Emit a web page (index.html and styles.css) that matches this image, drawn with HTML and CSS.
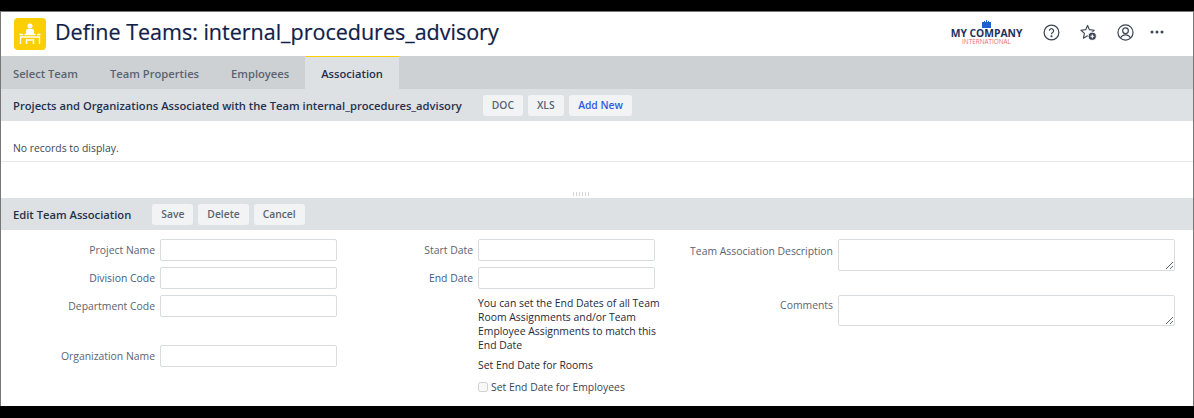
FILE: index.html
```html
<!DOCTYPE html>
<html lang="en">
<head>
    <meta charset="UTF-8">
    <title>Define Teams</title>
    <link rel="stylesheet" href="styles.css">
</head>
<body>
    <div class="page">
        <header class="header">
            <div class="app-icon">
                <svg width="32" height="32" viewBox="0 0 32 32" fill="none">
                    <rect x="13.5" y="5.5" width="5" height="5" rx="2.2" fill="#fff"/>
                    <path d="M12 17v-4.500q0-1.500 1.500-1.500h5q1.500 0 1.500 1.500V17z" fill="#fff"/>
                    <path d="M5.500 16.500H9M10.500 16.500H21.500M23 16.500H26.500" stroke="#fff" stroke-width="1.300"/>
                    <path d="M6.500 26v-7H25.500v7" stroke="#fff" stroke-width="1.300"/>
                    <path d="M12.500 26v-4h7v4" stroke="#fff" stroke-width="1.500"/>
                </svg>
            </div>
            <h1>Define Teams: internal_procedures_advisory</h1>
            <div class="header-right">
                <div class="logo">
                    <svg class="logo-mark" width="9" height="8" viewBox="0 0 9 8"><path d="M0 2h2V1h1v1h1V0h1v2h1V1h1v1h2v6H0z" fill="#1f5fd0"/></svg>
                    <span class="logo-name">MY COMPANY</span>
                    <span class="logo-sub">INTERNATIONAL</span>
                </div>
                <svg class="icon" width="17" height="17" viewBox="0 0 18 18" fill="none" stroke="#3c4654" stroke-width="1.300">
                    <circle cx="9" cy="9" r="7.800"/>
                    <path d="M6.800 7.200a2.200 2.200 0 1 1 3.400 1.800c-.8.500-1.200.9-1.200 1.800"/>
                    <circle cx="9" cy="13" r=".5" fill="#3c4654"/>
                </svg>
                <svg class="icon" width="17" height="17" viewBox="0 0 18 18" fill="none">
                    <path d="M8 1.500L10 6l5 .6-3.700 3.400 1.100 5L8 12.400 3.600 15l1.100-5L1 6.600 6 6z" stroke="#3c4654" stroke-width="1.200" stroke-linejoin="round"/>
                    <circle cx="13" cy="13" r="4.300" fill="#3c4654" stroke="#fff"/>
                    <path d="M13 11v4M11 13h4" stroke="#fff" stroke-width="1.200"/>
                </svg>
                <svg class="icon icon-last" width="17" height="17" viewBox="0 0 18 18" fill="none" stroke="#3c4654" stroke-width="1.300">
                    <circle cx="9" cy="9" r="8"/>
                    <circle cx="9" cy="7.200" r="3"/>
                    <path d="M3.800 14.800c1-2.400 2.900-3.400 5.200-3.400s4.200 1 5.200 3.400"/>
                </svg>
                <svg class="icon-more" width="14" height="4" viewBox="0 0 14 4" fill="#3c4654">
                    <circle cx="2" cy="2" r="1.500"/><circle cx="7" cy="2" r="1.500"/><circle cx="12" cy="2" r="1.500"/>
                </svg>
            </div>
        </header>

        <nav class="tabs">
            <a class="tab">Select Team</a>
            <a class="tab">Team Properties</a>
            <a class="tab">Employees</a>
            <a class="tab active">Association</a>
        </nav>

        <div class="bar">
            <span class="bar-title">Projects and Organizations Associated with the Team internal_procedures_advisory</span>
            <button class="btn">DOC</button>
            <button class="btn">XLS</button>
            <button class="btn btn-add">Add New</button>
        </div>

        <div class="records">No records to display.</div>
        <div class="splitter"><span class="grip"></span></div>

        <div class="bar bar-edit">
            <span class="bar-title">Edit Team Association</span>
            <button class="btn">Save</button>
            <button class="btn">Delete</button>
            <button class="btn">Cancel</button>
        </div>

        <form class="form">
            <div class="col col-one">
                <div class="field"><label>Project Name</label><input type="text"></div>
                <div class="field"><label class="link">Division Code</label><input type="text"></div>
                <div class="field"><label>Department Code</label><input type="text"></div>
                <div class="field field-org"><label>Organization Name</label><input type="text"></div>
            </div>
            <div class="col col-two">
                <div class="field"><label>Start Date</label><input type="text"></div>
                <div class="field"><label class="link">End Date</label><input type="text"></div>
                <p class="note">You can set the End Dates of all Team Room Assignments and/or Team Employee Assignments to match this End Date</p>
                <p class="note-line">Set End Date for Rooms</p>
                <div class="check-row"><input type="checkbox" disabled><span>Set End Date for Employees</span></div>
            </div>
            <div class="col col-three">
                <div class="field field-area"><label>Team Association Description</label><textarea></textarea></div>
                <div class="field field-area field-comments"><label>Comments</label><textarea></textarea></div>
            </div>
        </form>
    </div>
</body>
</html>
```

FILE: styles.css
```css
html, body {
    margin: 0;
    padding: 0;
    background-color: #000;
}
body {
    font-family: "Open Sans", Arial, sans-serif;
    font-size: 10.4px;
    color: #1f2937;
    height: 418px;
    overflow: hidden;
}
.page {
    margin-top: 11px;
    height: 395px;
    box-sizing: border-box;
    background-color: #fff;
    border-top: 1px solid #777;
    border-left: 1px solid #777;
    border-right: 1px solid #777;
}
.header {
    height: 44px;
    display: flex;
    align-items: center;
    padding-left: 13px;
    padding-right: 29px;
}
.app-icon {
    width: 32px;
    height: 32px;
    background-color: #fccf05;
    border-radius: 4px;
}
.app-icon svg {
    display: block;
}
h1 {
    margin: 0 0 5px 9px;
    font-size: 21.5px;
    font-weight: 400;
    color: #10204a;
    -webkit-text-stroke: 0.2px #10204a;
}
.header-right {
    margin-left: auto;
    margin-bottom: 4px;
    display: flex;
    align-items: center;
}
.logo {
    width: 73px;
    display: flex;
    flex-direction: column;
    align-items: center;
    margin-right: 20px;
}
.logo-mark {
    display: block;
}
.logo-name {
    font-size: 10.3px;
    line-height: 10px;
    font-weight: 700;
    color: #1d3160;
    white-space: nowrap;
}
.logo-sub {
    font-size: 6.4px;
    line-height: 6px;
    margin-top: 1px;
    color: #e0706c;
}
.icon {
    display: block;
    margin-right: 20px;
}
.icon-last {
    margin-right: 16px;
}
.icon-more {
    display: block;
}
.tabs {
    height: 33px;
    display: flex;
    background-color: #cdd1d4;
}
.tab {
    display: flex;
    align-items: center;
    font-size: 11.2px;
    font-weight: 600;
    color: #5a6470;
    padding: 0 16px;
    box-sizing: border-box;
    height: 33px;
    border-top: 1px solid transparent;
}
.tab:first-child {
    padding-left: 12px;
}
.tab.active {
    background-color: #dee1e4;
    border-top-color: #fccf05;
    color: #25304d;
}
.bar {
    height: 32px;
    box-sizing: border-box;
    display: flex;
    align-items: center;
    background-color: #dee1e4;
    padding-left: 12px;
}
.bar-title {
    font-size: 11.2px;
    font-weight: 600;
    color: #25304d;
    margin-right: 21px;
}
.btn {
    font-family: inherit;
    font-size: 10.3px;
    font-weight: 600;
    color: #5a6470;
    background-color: #f1f3f5;
    border: none;
    border-radius: 3px;
    height: 21px;
    padding: 0 9px;
    margin-right: 5px;
}
.btn-add {
    color: #2f5be0;
    padding: 0 9.5px;
}
.records {
    height: 41px;
    box-sizing: border-box;
    padding: 20px 0 0 12px;
    color: #3c4654;
    border-bottom: 1px solid #e4e6e8;
}
.splitter {
    height: 36px;
    position: relative;
}
.grip {
    position: absolute;
    left: 571px;
    top: 30px;
    width: 18px;
    height: 4px;
    background-image: radial-gradient(#d4d7da 0.8px, transparent 0.8px);
    background-size: 3px 2px;
}
.form {
    display: flex;
    padding-top: 9px;
}
.col {
    display: flex;
    flex-direction: column;
}
.col-one {
    width: 336px;
}
.col-two {
    width: 318px;
}
.field {
    display: flex;
    align-items: center;
    height: 22px;
    margin-bottom: 6px;
}
.field label {
    flex: none;
    padding-right: 5px;
    box-sizing: border-box;
    text-align: right;
    color: #5a6470;
}
.field label.link {
    color: #3f5c86;
}
.col-one label {
    width: 159px;
}
.col-two label {
    width: 141px;
}
.field input {
    width: 177px;
    height: 22px;
    box-sizing: border-box;
    border: 1px solid #d9dcde;
    border-radius: 2px;
    background-color: #fff;
    margin: 0;
}
.field-org {
    margin-top: 22px;
}
.note {
    margin: 1px 0 0 141px;
    width: 190px;
    line-height: 14px;
}
.note-line {
    margin: 6px 0 0 141px;
    line-height: 14px;
}
.check-row {
    display: flex;
    align-items: center;
    margin: 8px 0 0 141px;
}
.check-row input {
    width: 10px;
    height: 10px;
    margin: 0 3px 0 0;
    border-radius: 2px;
}
.check-row span {
    color: #3c4654;
}
.col-three .field-area {
    height: 32px;
    margin-bottom: 24px;
    align-items: flex-start;
}
.col-three label {
    width: 183px;
    padding-top: 5px;
    white-space: nowrap;
}
.col-three .field-comments label {
    padding-top: 3px;
}
.col-three textarea {
    width: 337px;
    height: 32px;
    box-sizing: border-box;
    border: 1px solid #d9dcde;
    border-radius: 2px;
    margin: 0;
    display: block;
}
.col-three .field-comments textarea {
    height: 31px;
}
```
